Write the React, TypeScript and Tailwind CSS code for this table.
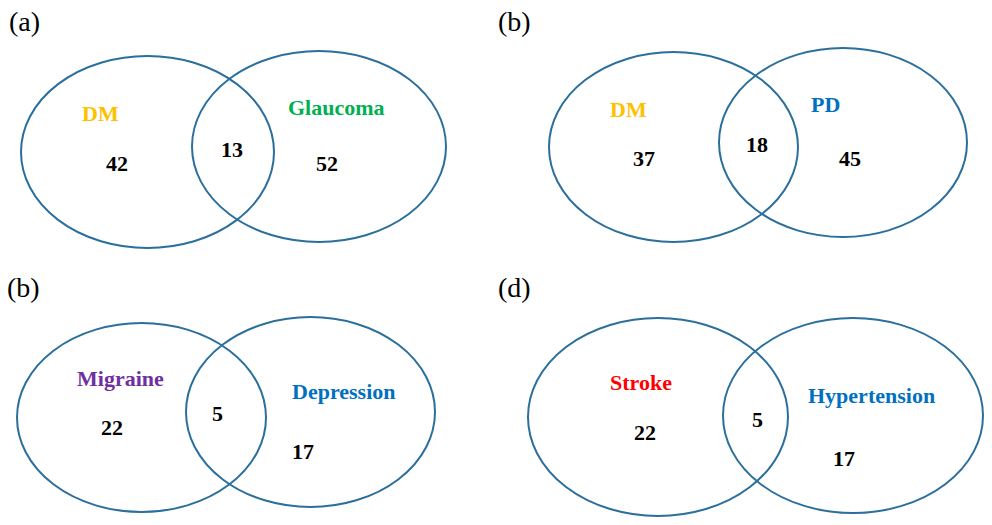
type Label = { text: string; x: number; y: number; color: string };
type Ell = { cx: number; cy: number; rx: number; ry: number };

interface VennPanel {
  tag: string;
  tagX: number;
  tagY: number;
  height: number;
  ellipses: Ell[];
  labels: Label[];
}

const panels: VennPanel[] = [
  {
    tag: '(a)',
    tagX: 9,
    tagY: 31,
    height: 262,
    ellipses: [
      { cx: 147.5, cy: 152, rx: 126.5, ry: 96 },
      { cx: 319, cy: 146.5, rx: 127, ry: 95.5 },
    ],
    labels: [
      { text: 'DM', x: 82, y: 121, color: '#FFC000' },
      { text: 'Glaucoma', x: 288, y: 115, color: '#00B050' },
      { text: '42', x: 106, y: 171, color: '#000' },
      { text: '13', x: 221, y: 157, color: '#000' },
      { text: '52', x: 316, y: 171, color: '#000' },
    ],
  },
  {
    tag: '(b)',
    tagX: 2,
    tagY: 31,
    height: 262,
    ellipses: [
      { cx: 177.5, cy: 147, rx: 124.5, ry: 95 },
      { cx: 347, cy: 142.5, rx: 124, ry: 94.5 },
    ],
    labels: [
      { text: 'DM', x: 114, y: 117, color: '#FFC000' },
      { text: 'PD', x: 315, y: 112, color: '#0070C0' },
      { text: '37', x: 137, y: 166, color: '#000' },
      { text: '18', x: 250, y: 152, color: '#000' },
      { text: '45', x: 343, y: 166, color: '#000' },
    ],
  },
  {
    tag: '(b)',
    tagX: 7,
    tagY: 35,
    height: 263,
    ellipses: [
      { cx: 141.5, cy: 155.5, rx: 124.5, ry: 94.5 },
      { cx: 310.5, cy: 150, rx: 124.5, ry: 95 },
    ],
    labels: [
      { text: 'Migraine', x: 77, y: 124, color: '#7030A0' },
      { text: 'Depression', x: 292, y: 137, color: '#0070C0' },
      { text: '22', x: 101, y: 173, color: '#000' },
      { text: '5', x: 212, y: 159, color: '#000' },
      { text: '17', x: 292, y: 197, color: '#000' },
    ],
  },
  {
    tag: '(d)',
    tagX: 2,
    tagY: 35,
    height: 263,
    ellipses: [
      { cx: 162, cy: 155, rx: 130, ry: 99 },
      { cx: 357, cy: 153.5, rx: 130, ry: 97.5 },
    ],
    labels: [
      { text: 'Stroke', x: 114, y: 128, color: '#FF0000' },
      { text: 'Hypertension', x: 312, y: 141, color: '#0070C0' },
      { text: '22', x: 138, y: 178, color: '#000' },
      { text: '5', x: 256, y: 165, color: '#000' },
      { text: '17', x: 337, y: 204, color: '#000' },
    ],
  },
];

function Venn({ panel }: { panel: VennPanel }) {
  return (
    <svg
      width={496}
      height={panel.height}
      viewBox={`0 0 496 ${panel.height}`}
      className="block"
      fontFamily="'Liberation Serif', 'Times New Roman', serif"
    >
      <text x={panel.tagX} y={panel.tagY} fontSize={28} fill="#000">
        {panel.tag}
      </text>
      {panel.ellipses.map((e, i) => (
        <ellipse key={i} cx={e.cx} cy={e.cy} rx={e.rx} ry={e.ry} fill="none" stroke="#2b6f9c" strokeWidth={2} />
      ))}
      {panel.labels.map((l, i) => (
        <text key={i} x={l.x} y={l.y} fontSize={22} fontWeight="bold" fill={l.color}>
          {l.text}
        </text>
      ))}
    </svg>
  );
}

export default function App() {
  return (
    <div className="grid w-[992px] h-[525px] grid-cols-2 bg-white font-['Liberation_Serif','Times_New_Roman',serif]">
      {panels.map((p, i) => (
        <Venn key={i} panel={p} />
      ))}
    </div>
  );
}
